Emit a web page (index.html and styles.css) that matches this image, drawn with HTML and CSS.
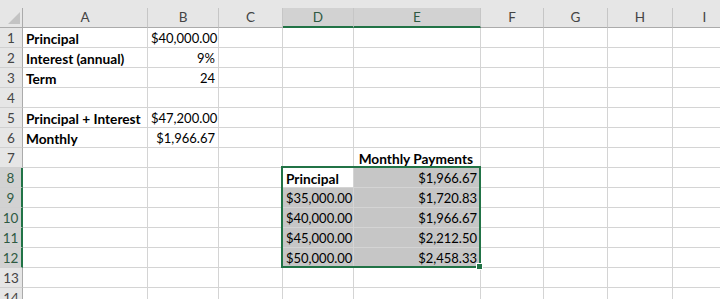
FILE: index.html
```html
<!DOCTYPE html>
<html>
<head>
<meta charset="utf-8">
<link rel="stylesheet" href="styles.css">
</head>
<body>
<div class="sheet">
  <div class="band"></div>

  <div class="h corner"><svg width="23" height="20" viewBox="0 0 23 20"><polygon points="20,4 20,16 8,16" fill="#c3c3c3"/></svg></div>
  <div class="h">A</div><div class="h">B</div><div class="h">C</div><div class="h hs">D</div><div class="h hs">E</div><div class="h">F</div><div class="h">G</div><div class="h">H</div><div class="h">I</div>

  <div class="r">1</div><div class="c b">Principal</div><div class="c n">$40,000.00</div><div class="c"></div><div class="c"></div><div class="c"></div><div class="c"></div><div class="c"></div><div class="c"></div><div class="c"></div>
  <div class="r">2</div><div class="c b">Interest (annual)</div><div class="c n">9%</div><div class="c"></div><div class="c"></div><div class="c"></div><div class="c"></div><div class="c"></div><div class="c"></div><div class="c"></div>
  <div class="r">3</div><div class="c b">Term</div><div class="c n">24</div><div class="c"></div><div class="c"></div><div class="c"></div><div class="c"></div><div class="c"></div><div class="c"></div><div class="c"></div>
  <div class="r">4</div><div class="c"></div><div class="c"></div><div class="c"></div><div class="c"></div><div class="c"></div><div class="c"></div><div class="c"></div><div class="c"></div><div class="c"></div>
  <div class="r">5</div><div class="c b">Principal + Interest</div><div class="c n">$47,200.00</div><div class="c"></div><div class="c"></div><div class="c"></div><div class="c"></div><div class="c"></div><div class="c"></div><div class="c"></div>
  <div class="r">6</div><div class="c b">Monthly</div><div class="c n">$1,966.67</div><div class="c"></div><div class="c"></div><div class="c"></div><div class="c"></div><div class="c"></div><div class="c"></div><div class="c"></div>
  <div class="r">7</div><div class="c"></div><div class="c"></div><div class="c"></div><div class="c"></div><div class="c b n title">Monthly Payments</div><div class="c"></div><div class="c"></div><div class="c"></div><div class="c"></div>
  <div class="r rs">8</div><div class="c"></div><div class="c"></div><div class="c"></div><div class="c b active">Principal<div class="selection"><span class="handle"></span></div></div><div class="c n hl">$1,966.67</div><div class="c"></div><div class="c"></div><div class="c"></div><div class="c"></div>
  <div class="r rs">9</div><div class="c"></div><div class="c"></div><div class="c"></div><div class="c n hl">$35,000.00</div><div class="c n hl">$1,720.83</div><div class="c"></div><div class="c"></div><div class="c"></div><div class="c"></div>
  <div class="r rs">10</div><div class="c"></div><div class="c"></div><div class="c"></div><div class="c n hl">$40,000.00</div><div class="c n hl">$1,966.67</div><div class="c"></div><div class="c"></div><div class="c"></div><div class="c"></div>
  <div class="r rs">11</div><div class="c"></div><div class="c"></div><div class="c"></div><div class="c n hl">$45,000.00</div><div class="c n hl">$2,212.50</div><div class="c"></div><div class="c"></div><div class="c"></div><div class="c"></div>
  <div class="r rs">12</div><div class="c"></div><div class="c"></div><div class="c"></div><div class="c n hl">$50,000.00</div><div class="c n hl">$2,458.33</div><div class="c"></div><div class="c"></div><div class="c"></div><div class="c"></div>
  <div class="r">13</div><div class="c"></div><div class="c"></div><div class="c"></div><div class="c"></div><div class="c"></div><div class="c"></div><div class="c"></div><div class="c"></div><div class="c"></div>
  <div class="r">14</div><div class="c"></div><div class="c"></div><div class="c"></div><div class="c"></div><div class="c"></div><div class="c"></div><div class="c"></div><div class="c"></div><div class="c"></div>
</div>
</body>
</html>
```
FILE: styles.css
```css
html, body {
  margin: 0;
  padding: 0;
  background: #ffffff;
}
body {
  width: 720px;
  height: 299px;
  overflow: hidden;
}
.sheet {
  display: grid;
  grid-template-columns: 23px 125px 71px 64px 71px 127px 63px 64px 65px 64px;
  grid-template-rows: 8px 20px repeat(14, 20px);
  font-family: Lato, "Liberation Sans", sans-serif;
  font-size: 13px;
  color: #000;
  width: 737px;
}
.band {
  grid-column: 1 / -1;
  background: #e6e6e6;
}
.h {
  box-sizing: border-box;
  background: #e6e6e6;
  border-right: 1px solid #c6c6c6;
  border-bottom: 1px solid #ababab;
  color: #444;
  font-size: 13.5px;
  text-align: center;
  line-height: 19px;
  overflow: hidden;
}
.corner {
  border-right: 1px solid #ababab;
  line-height: 0;
}
.hs {
  background: #d2d2d2;
  border-bottom: 2px solid #217346;
  color: #2e5a42;
}
.r {
  box-sizing: border-box;
  background: #e6e6e6;
  border-right: 1px solid #ababab;
  border-bottom: 1px solid #d0d0d0;
  color: #444;
  font-size: 13.5px;
  text-align: center;
  line-height: 19px;
  padding-top: 1px;
}
.rs {
  background: #d2d2d2;
  border-right: 2px solid #217346;
  color: #2e5a42;
}
.c {
  box-sizing: border-box;
  border-right: 1px solid #d4d4d4;
  border-bottom: 1px solid #d4d4d4;
  line-height: 19px;
  padding: 1px 3px 0 3px;
  white-space: nowrap;
}
.b { font-weight: bold; font-size: 13.7px; }
.n { text-align: right; }
.title { padding-right: 7px; }
.hl { background: #c6c6c6; }
.active { position: relative; }
.selection {
  position: absolute;
  left: -2px;
  top: -2px;
  width: 200px;
  height: 102px;
  box-sizing: border-box;
  border: 2px solid #217346;
  z-index: 2;
  pointer-events: none;
}
.handle {
  position: absolute;
  right: -4px;
  bottom: -4px;
  width: 5px;
  height: 5px;
  background: #217346;
  border: 1px solid #ffffff;
}
```
